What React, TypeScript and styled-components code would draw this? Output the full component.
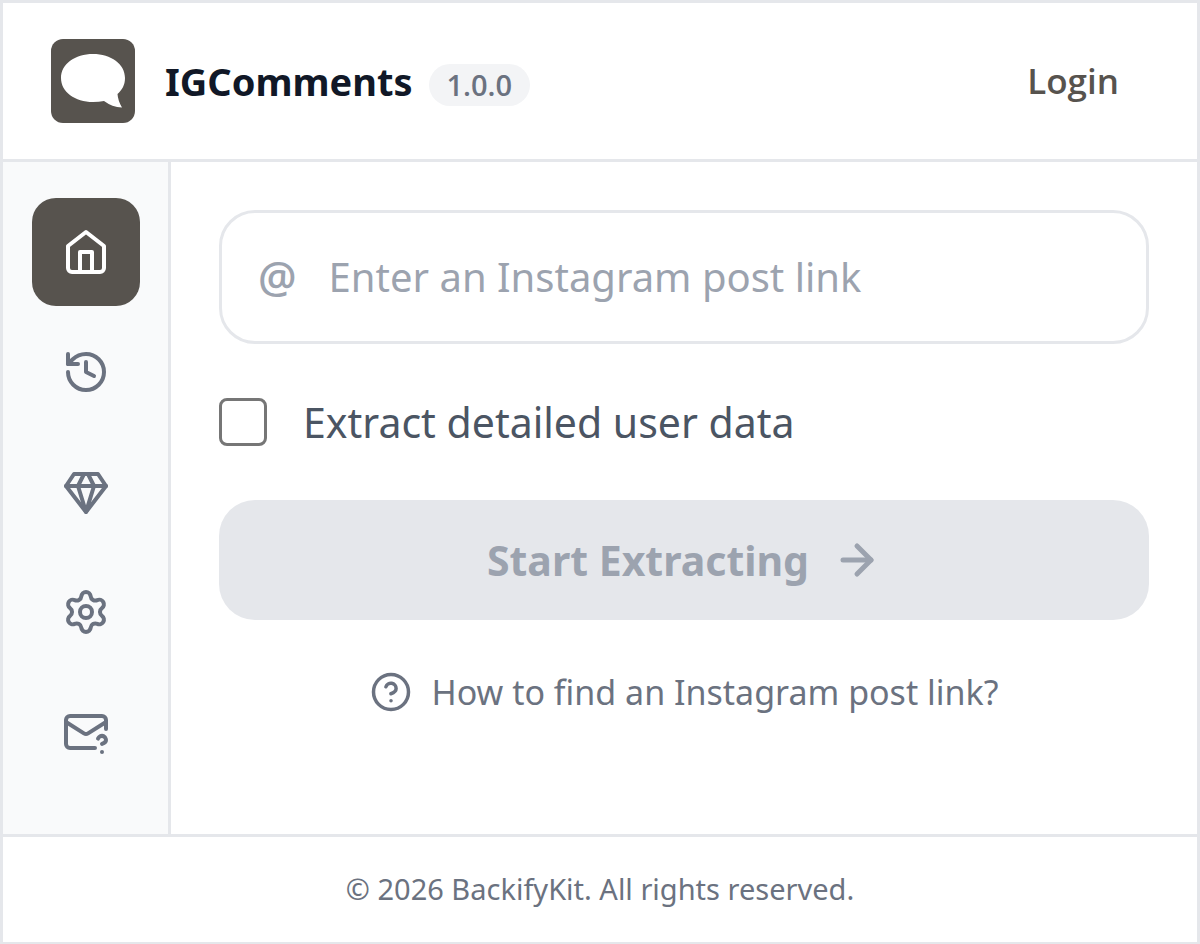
import React from "react";
import styled, { createGlobalStyle } from "styled-components";
import { ArrowRight, History, Settings } from "lucide-react";

const colors = {
  line: "#e5e7eb",
  brand: "#57534e",
  muted: "#6b7280",
  faint: "#9ca3af",
};

const mediumFont = `"Open Sans", "Noto Sans", sans-serif`;

const GlobalStyle = createGlobalStyle`
  *, *::before, *::after { box-sizing: border-box; }
  body {
    margin: 0;
    background: #fff;
    color: ${colors.muted};
    font-family: "Noto Sans", "Open Sans", sans-serif;
  }
  button, input { font: inherit; }
`;

const Frame = styled.div`
  display: flex;
  flex-direction: column;
  min-height: 100vh;
  border: 3px solid ${colors.line};
  border-bottom-width: 2px;
`;

const Header = styled.header`
  display: flex;
  align-items: center;
  justify-content: space-between;
  padding: 36px 48px;
  border-bottom: 3px solid ${colors.line};
`;

const Brand = styled.div`
  display: flex;
  align-items: center;
`;

const Logo = styled.svg`
  display: block;
  width: 84px;
  height: 84px;
  margin-right: 30px;
`;

const Title = styled.h1`
  margin: 0 16px 0 0;
  color: #111827;
  font-size: 38px;
  font-weight: 700;
  line-height: 48px;
`;

const Version = styled.span`
  margin-top: 8px;
  padding: 0 18px;
  border-radius: 21px;
  background: #f3f4f6;
  font-family: ${mediumFont};
  font-size: 29px;
  font-weight: 600;
  line-height: 42px;
`;

const LoginLink = styled.a`
  padding: 0 30px;
  color: ${colors.brand};
  font-family: ${mediumFont};
  font-size: 35px;
  font-weight: 600;
  line-height: 48px;
  text-decoration: none;
`;

const Body = styled.div`
  display: flex;
  flex: 1;
`;

const Sidebar = styled.nav`
  display: flex;
  flex-direction: column;
  align-items: center;
  gap: 12px;
  width: 168px;
  padding: 36px 0;
  border-right: 3px solid ${colors.line};
  background: #f9fafb;
`;

const NavButton = styled.button<{ $active?: boolean }>`
  display: grid;
  place-items: center;
  width: 108px;
  height: 108px;
  padding: 0;
  border: 0;
  border-radius: 24px;
  background: ${(p) => (p.$active ? colors.brand : "transparent")};
  color: ${(p) => (p.$active ? "#fff" : colors.muted)};
  cursor: pointer;
`;

const Stroke = styled.svg`
  width: 48px;
  height: 48px;
  fill: none;
  stroke: currentColor;
  stroke-width: 2;
  stroke-linecap: round;
  stroke-linejoin: round;
`;

const HelpIcon = styled(Stroke)`
  width: 42px;
  height: 42px;
`;

const Main = styled.main`
  display: flex;
  flex: 1;
  flex-direction: column;
  min-width: 0;
  padding: 48px;
`;

const Field = styled.label`
  display: flex;
  align-items: center;
  gap: 32px;
  height: 134px;
  padding: 0 36px;
  border: 3px solid ${colors.line};
  border-radius: 36px;
  color: ${colors.faint};
`;

const At = styled.span`
  font-family: ${mediumFont};
  font-size: 43px;
  font-weight: 600;
  line-height: 60px;
`;

const LinkInput = styled.input`
  flex: 1;
  min-width: 0;
  padding: 0;
  border: 0;
  outline: 0;
  background: transparent;
  color: #111827;
  font-size: 40px;
  line-height: 60px;
  &::placeholder { color: ${colors.faint}; opacity: 1; }
`;

const Option = styled.label`
  display: flex;
  align-items: center;
  gap: 36px;
  margin: 54px 0;
  color: #4b5563;
  font-size: 41px;
  line-height: 48px;
`;

const Checkbox = styled.input`
  appearance: none;
  width: 48px;
  height: 48px;
  margin: 0;
  border: 3px solid #767676;
  border-radius: 8px;
  background: #fff;
  &:checked { background: ${colors.brand}; }
`;

const StartButton = styled.button`
  display: flex;
  align-items: center;
  justify-content: center;
  gap: 24px;
  height: 120px;
  padding: 0 36px;
  border: 0;
  border-radius: 36px;
  background: ${colors.line};
  color: ${colors.faint};
  font-size: 41px;
  font-weight: 700;
  line-height: 48px;
`;

const HelpLink = styled.a`
  display: flex;
  align-items: center;
  align-self: center;
  gap: 20px;
  margin-top: 48px;
  color: ${colors.muted};
  font-size: 34px;
  line-height: 48px;
  text-decoration: none;
`;

const Footer = styled.footer`
  padding: 28px 48px 29px;
  border-top: 3px solid ${colors.line};
  font-size: 29px;
  line-height: 48px;
  text-align: center;
`;

export default function App() {
  return (
    <>
      <GlobalStyle />
      <Frame>
        <Header>
          <Brand>
            <Logo viewBox="0 0 84 84" aria-hidden="true">
              <rect width="84" height="84" rx="12" fill={colors.brand} />
              <path
                fill="#fff"
                d="M42 15C24 15 10 25 10 39S24 63 42 63Q48 63 53 62Q61 68 71 68.500Q67 62 66.500 55C71 51 74 46 74 39C74 25 60 15 42 15Z"
              />
            </Logo>
            <Title>IGComments</Title>
            <Version>1.0.0</Version>
          </Brand>
          <LoginLink href="#login">Login</LoginLink>
        </Header>
        <Body>
          <Sidebar aria-label="Main">
            <NavButton type="button" $active aria-label="Home">
              <Stroke viewBox="0 0 24 24">
                <path d="m3 9 9-7 9 7v11a2 2 0 0 1-2 2H5a2 2 0 0 1-2-2z" />
                <path d="M9 22V12h6v10" />
              </Stroke>
            </NavButton>
            <NavButton type="button" aria-label="History">
              <History size={48} />
            </NavButton>
            <NavButton type="button" aria-label="Plans">
              <Stroke viewBox="0 0 24 24">
                <path d="M6 3h12l4 6-10 13L2 9Z" />
                <path d="M11 3 8 9l4 13 4-13-3-6" />
                <path d="M2 9h20" />
              </Stroke>
            </NavButton>
            <NavButton type="button" aria-label="Settings">
              <Settings size={48} />
            </NavButton>
            <NavButton type="button" aria-label="Contact">
              <Stroke viewBox="0 0 24 24">
                <path d="M22 10.500V6a2 2 0 0 0-2-2H4a2 2 0 0 0-2 2v12c0 1.100.9 2 2 2h12.500" />
                <path d="m22 7-8.970 5.700a1.940 1.940 0 0 1-2.060 0L2 7" />
                <path d="M18 15.280c.2-.4.5-.8.9-1a2.100 2.100 0 0 1 2.600.4c.3.4.5.8.5 1.300 0 1.300-2 2-2 2" />
                <path d="M20 22v.01" />
              </Stroke>
            </NavButton>
          </Sidebar>
          <Main>
            <Field>
              <At aria-hidden="true">@</At>
              <LinkInput
                type="text"
                aria-label="Instagram post link"
                placeholder="Enter an Instagram post link"
              />
            </Field>
            <Option>
              <Checkbox type="checkbox" />
              Extract detailed user data
            </Option>
            <StartButton type="button" disabled>
              Start Extracting
              <ArrowRight size={48} strokeWidth={2.5} />
            </StartButton>
            <HelpLink href="#help">
              <HelpIcon viewBox="0 0 24 24">
                <circle cx="12" cy="12" r="10" />
                <path d="M9.090 9a3 3 0 0 1 5.830 1c0 2-3 3-3 3" />
                <path d="M12 17h.01" />
              </HelpIcon>
              How to find an Instagram post link?
            </HelpLink>
          </Main>
        </Body>
        <Footer>© 2026 BackifyKit. All rights reserved.</Footer>
      </Frame>
    </>
  );
}
